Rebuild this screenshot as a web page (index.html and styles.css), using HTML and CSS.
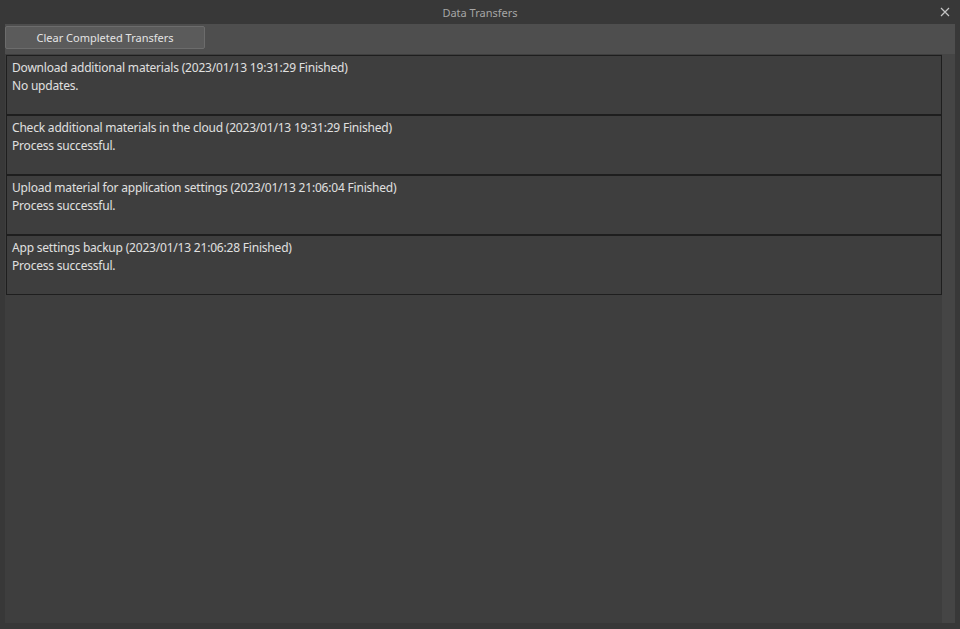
FILE: index.html
```html
<!DOCTYPE html>
<html lang="en">
<head>
  <meta charset="UTF-8" />
  <title>Data Transfers</title>
  <link rel="stylesheet" href="styles.css">
</head>
<body>

  <div class="titlebar">
    <span class="title">Data Transfers</span>
    <svg class="close" width="10" height="10" viewBox="0 0 10 10">
      <path d="M1 1 L9 9 M9 1 L1 9" stroke="#c4c4c4" stroke-width="1.2" fill="none"/>
    </svg>
  </div>

  <div class="panel">
    <div class="toolbar">
      <button class="clear-button">Clear Completed Transfers</button>
    </div>

    <div class="content">
      <div class="list">
        <div class="item">
          <div>Download additional materials (2023/01/13 19:31:29 Finished)</div>
          <div>No updates.</div>
        </div>
        <div class="item">
          <div>Check additional materials in the cloud (2023/01/13 19:31:29 Finished)</div>
          <div>Process successful.</div>
        </div>
        <div class="item">
          <div>Upload material for application settings (2023/01/13 21:06:04 Finished)</div>
          <div>Process successful.</div>
        </div>
        <div class="item">
          <div>App settings backup (2023/01/13 21:06:28 Finished)</div>
          <div>Process successful.</div>
        </div>
      </div>
      <div class="scrollbar"></div>
    </div>
  </div>

</body>
</html>
```

FILE: styles.css
```css
html, body {
  margin: 0;
  height: 100%;
}

body {
  background-color: #383838;
  font-family: 'Noto Sans', 'Open Sans', sans-serif;
  font-size: 12px;
  color: #e0e0e0;
  display: flex;
  flex-direction: column;
  overflow: hidden;
}

.titlebar {
  height: 24px;
  flex-shrink: 0;
  position: relative;
  display: flex;
  align-items: center;
  justify-content: center;
}

.title {
  color: #a6a6a6;
  font-size: 11px;
}

.close {
  position: absolute;
  right: 10px;
  top: 7px;
}

.panel {
  margin: 0 5px 6px 5px;
  flex: 1;
  display: flex;
  flex-direction: column;
  background-color: #3e3e3e;
}

.toolbar {
  height: 30px;
  background-color: #4e4e4e;
  padding: 2px 0 0 0;
  box-sizing: border-box;
  flex-shrink: 0;
}

.clear-button {
  width: 200px;
  height: 23px;
  background-color: #5b5b5b;
  border: 1px solid #6c6c6c;
  border-radius: 2px;
  color: #e4e4e4;
  font-family: inherit;
  font-size: 11px;
  padding: 0;
}

.content {
  flex: 1;
  display: flex;
}

.list {
  flex: 1;
  padding: 1px 0 0 1px;
}

.item {
  border: 1px solid #1e1e1e;
  padding: 3px 5px;
  line-height: 18px;
  height: 52px;
  letter-spacing: -0.2px;
}

.scrollbar {
  width: 13px;
  background-color: #454545;
}
```
